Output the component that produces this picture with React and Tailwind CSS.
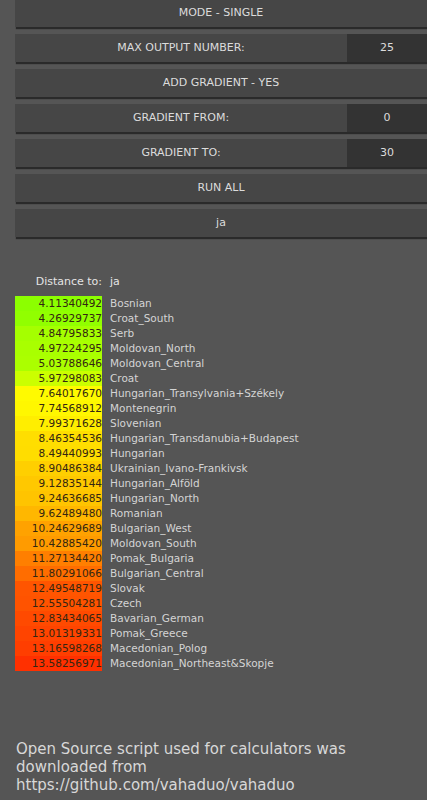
import React from "react";

const rows = [
  ["4.11340492", "Bosnian"],
  ["4.26929737", "Croat_South"],
  ["4.84795833", "Serb"],
  ["4.97224295", "Moldovan_North"],
  ["5.03788646", "Moldovan_Central"],
  ["5.97298083", "Croat"],
  ["7.64017670", "Hungarian_Transylvania+Székely"],
  ["7.74568912", "Montenegrin"],
  ["7.99371628", "Slovenian"],
  ["8.46354536", "Hungarian_Transdanubia+Budapest"],
  ["8.49440993", "Hungarian"],
  ["8.90486384", "Ukrainian_Ivano-Frankivsk"],
  ["9.12835144", "Hungarian_Alföld"],
  ["9.24636685", "Hungarian_North"],
  ["9.62489480", "Romanian"],
  ["10.24629689", "Bulgarian_West"],
  ["10.42885420", "Moldovan_South"],
  ["11.27134420", "Pomak_Bulgaria"],
  ["11.80291066", "Bulgarian_Central"],
  ["12.49548719", "Slovak"],
  ["12.55504281", "Czech"],
  ["12.83434065", "Bavarian_German"],
  ["13.01319331", "Pomak_Greece"],
  ["13.16598268", "Macedonian_Polog"],
  ["13.58256971", "Macedonian_Northeast&Skopje"],
];

const hue = (v) => Math.max(0, 120 - 8 * parseFloat(v));

function Btn({ children }) {
  return (
    <div className="h-[28px] bg-[#464646] shadow-[1px_2px_1px_#2a2a2a] flex items-center justify-center text-[11px] text-[#dcdcdc]">
      {children}
    </div>
  );
}

function Field({ label, value }) {
  return (
    <div className="h-[28px] flex shadow-[1px_2px_1px_#2a2a2a]">
      <div className="flex-1 bg-[#464646] flex items-center justify-center text-[11px] text-[#dcdcdc]">{label}</div>
      <div className="w-[80px] bg-[#333333] flex items-center justify-center text-[11px] text-[#dcdcdc]">{value}</div>
    </div>
  );
}

export default function App() {
  return (
    <div className="min-h-[800px] bg-[#555555] font-['DejaVu_Sans',sans-serif] overflow-hidden">
      <div className="pl-[15px] -mt-[1px] flex flex-col gap-[7px]">
        <Btn>MODE - SINGLE</Btn>
        <Field label="MAX OUTPUT NUMBER:" value="25" />
        <Btn>ADD GRADIENT - YES</Btn>
        <Field label="GRADIENT FROM:" value="0" />
        <Field label="GRADIENT TO:" value="30" />
        <Btn>RUN ALL</Btn>
        <Btn>ja</Btn>
      </div>

      <div className="pl-[15px] mt-[36px]">
        <div className="flex h-[18px] items-center text-[11px]">
          <div className="w-[87px] text-right text-[#e4e4e4]">Distance to:</div>
          <div className="pl-[8px] text-[#e4e4e4]">ja</div>
        </div>
        <div className="mt-[5px] flex flex-col text-[10.5px]">
          {rows.map(([v, n]) => (
            <div key={n} className="flex h-[15px] items-center">
              <div
                className="w-[87px] h-full flex items-center justify-end text-[#332611]"
                style={{ backgroundColor: `hsl(${hue(v)}, 100%, 50%)` }}
              >
                {v}
              </div>
              <div className="pl-[8px] text-[#d4d4d4] whitespace-nowrap">{n}</div>
            </div>
          ))}
        </div>
      </div>

      <div className="px-[16px] mt-[69px] text-[15px] leading-[18px] text-[#d8d8d8]">
        Open Source script used for calculators was downloaded from https://github.com/vahaduo/vahaduo
      </div>
    </div>
  );
}
